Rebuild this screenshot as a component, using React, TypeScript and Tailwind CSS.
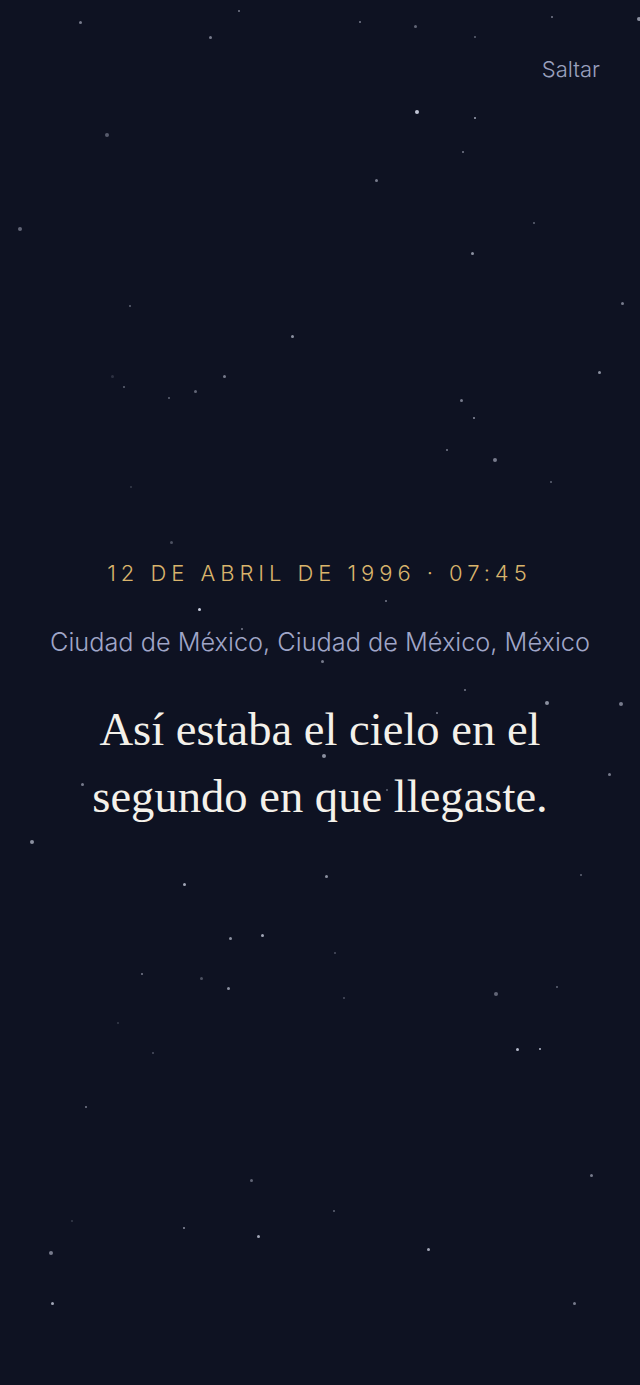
import React from "react";

type Star = [number, number, number, number];

const stars: Star[] = [
  [80, 22, 3, 0.5], [210, 37, 3, 0.5], [239, 11, 2, 0.5], [360, 22, 1.5, 0.5], [415, 26, 3, 0.4],
  [475, 37, 1.5, 0.4], [552, 17, 2, 0.5], [639, 19, 4, 0.6], [417, 112, 4, 0.85], [475, 118, 2, 0.7],
  [107, 135, 4, 0.35], [463, 152, 2, 0.5], [376, 180, 3, 0.5], [20, 229, 4, 0.4], [534, 223, 1.5, 0.4],
  [472, 253, 3, 0.6], [130, 306, 2, 0.4], [622, 303, 3, 0.5], [292, 336, 3, 0.6],
  [112, 376, 3, 0.15], [124, 387, 1.5, 0.4], [224, 376, 3, 0.5], [195, 391, 3, 0.4], [169, 398, 2, 0.4],
  [461, 400, 3, 0.5], [474, 418, 2, 0.6], [599, 372, 3, 0.6], [447, 450, 2, 0.5], [495, 460, 4, 0.5],
  [551, 482, 2, 0.4], [131, 487, 2, 0.2], [171, 542, 3, 0.3], [199, 609, 3, 0.9], [386, 601, 1.5, 0.5],
  [242, 629, 1.5, 0.5], [322, 661, 3, 0.5], [465, 690, 1.5, 0.5],
  [547, 703, 4, 0.6], [621, 704, 4, 0.5], [437, 713, 2, 0.5], [324, 756, 4, 0.6], [609, 774, 3, 0.5],
  [82, 784, 3, 0.5], [387, 790, 2, 0.4], [32, 842, 4, 0.6], [326, 876, 3, 0.6], [184, 884, 3, 0.7],
  [581, 875, 1.5, 0.4], [262, 935, 3, 0.7], [230, 938, 3, 0.6], [335, 953, 1.5, 0.3], [142, 974, 2, 0.5],
  [201, 978, 3, 0.3], [228, 988, 3, 0.6], [496, 994, 4, 0.4], [557, 987, 2, 0.4], [344, 998, 1.5, 0.3],
  [118, 1023, 2, 0.2],
  [153, 1053, 2, 0.3], [517, 1049, 3, 0.8], [540, 1049, 2, 0.8], [86, 1107, 2, 0.5], [251, 1180, 3, 0.4],
  [591, 1175, 3, 0.5], [334, 1211, 1.5, 0.4], [72, 1221, 2, 0.2], [184, 1228, 1.5, 0.6], [258, 1236, 3, 0.7],
  [428, 1249, 3, 0.7], [51, 1253, 4, 0.5], [52, 1303, 3, 0.7], [574, 1303, 3, 0.5],
];

export default function App() {
  return (
    <div className="relative min-h-[1385px] w-full overflow-hidden bg-[#0e1222] flex flex-col items-center justify-center">
      {stars.map(([x, y, s, o], i) => (
        <span
          key={i}
          className="absolute rounded-full bg-[#dfe4f5]"
          style={{ left: x - s / 2, top: y - s / 2, width: s, height: s, opacity: o }}
        />
      ))}

      <button className="absolute top-[55px] right-[40px] text-[22px] leading-[28px] text-[#9aa0bd] font-['Inter',sans-serif] font-light">
        Saltar
      </button>

      <div className="relative flex flex-col items-center text-center pt-[4px]">
        <p className="text-[22px] leading-7 tracking-[0.225em] text-[#d9b46c] font-['Inter',sans-serif] font-light pl-[0.225em] -ml-[6px]">
          12 DE ABRIL DE 1996 · 07:45
        </p>
        <p className="mt-[39px] text-[25.3px] leading-8 text-[#a0a6c8] font-['Inter',sans-serif] font-light">
          Ciudad de México, Ciudad de México, México
        </p>
        <h1 className="mt-[38px] w-[560px] text-[46.6px] leading-[67px] text-[#f4f1ea] font-['Liberation_Serif',serif] font-normal">
          Así estaba el cielo en el segundo en que llegaste.
        </h1>
      </div>
    </div>
  );
}
